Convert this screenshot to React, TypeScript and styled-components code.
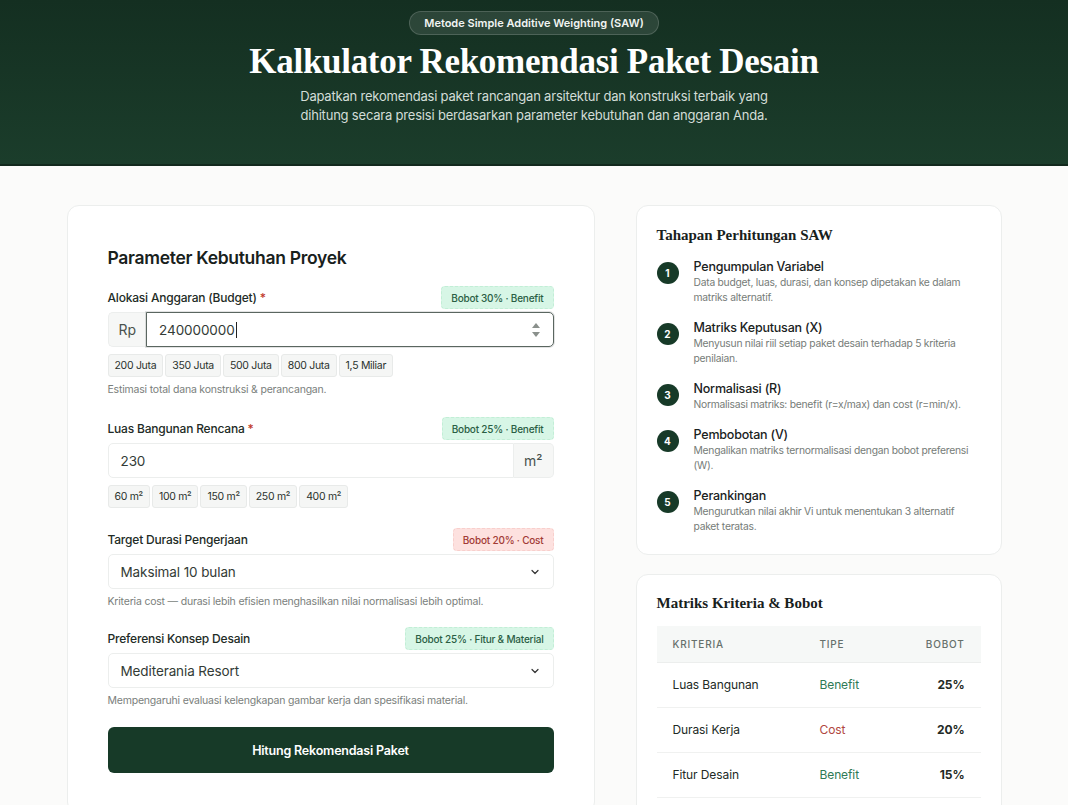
import React from 'react';
import styled, { createGlobalStyle } from 'styled-components';

const GlobalStyle = createGlobalStyle`
  * { box-sizing: border-box; }
  body {
    margin: 0;
    background: #fbfbfa;
    font-family: Inter, "Noto Sans", sans-serif;
    color: #1c2620;
  }
`;

const serif = `"Liberation Serif", "DejaVu Serif", serif`;

const Hero = styled.header`
  height: 166px;
  background: linear-gradient(180deg, #142f21 0%, #1b3d2b 100%);
  border-bottom: 2px solid #12291d;
  padding-top: 11px;
  display: flex;
  flex-direction: column;
  align-items: center;
  text-align: center;
`;

const Pill = styled.div`
  height: 24px;
  padding: 0 14px;
  display: flex;
  align-items: center;
  border-radius: 12px;
  background: rgba(255, 255, 255, 0.1);
  border: 1px solid rgba(255, 255, 255, 0.16);
  color: #f1f4f2;
  font-size: 11px;
  font-weight: 600;
`;

const HeroTitle = styled.h1`
  margin: 6px 0 0;
  font-family: ${serif};
  font-size: 35px;
  line-height: 42px;
  font-weight: 700;
  color: #ffffff;
  letter-spacing: -0.3px;
`;

const HeroText = styled.p`
  margin: 4px 0 0;
  width: 490px;
  font-size: 13px;
  line-height: 19px;
  color: #d3ddd7;
  letter-spacing: -0.2px;
`;

const Main = styled.main`
  width: 935px;
  margin: 39px auto 0;
  display: grid;
  grid-template-columns: 1fr 366px;
  gap: 41px;
  align-items: start;
`;

const Card = styled.section<{ $pad?: string }>`
  background: #ffffff;
  border: 1px solid #eceeed;
  border-radius: 12px;
  padding: ${p => p.$pad || '20px'};
`;

const SideCol = styled.div`
  display: flex;
  flex-direction: column;
  gap: 19px;
`;

const FormTitle = styled.h2`
  margin: 0 0 18px;
  font-size: 17.5px;
  font-weight: 600;
  letter-spacing: -0.3px;
  color: #18211c;
`;

const Field = styled.div<{ $gap: number }>`
  margin-bottom: ${p => p.$gap}px;
`;

const LabelRow = styled.div`
  display: flex;
  justify-content: space-between;
  align-items: center;
  height: 23px;
  margin-bottom: 3px;
`;

const Label = styled.label`
  font-size: 12px;
  font-weight: 500;
  color: #222b26;
  letter-spacing: -0.2px;
  span { color: #c0392b; }
`;

const Weight = styled.span<{ $cost?: boolean }>`
  height: 23px;
  padding: 0 9px;
  display: inline-flex;
  align-items: center;
  border-radius: 4px;
  font-size: 10px;
  font-weight: 500;
  letter-spacing: -0.2px;
  background: ${p => (p.$cost ? '#fde1df' : '#d7f6e6')};
  color: ${p => (p.$cost ? '#a23a35' : '#2a5e44')};
  border: 1px dashed ${p => (p.$cost ? '#f8cfcc' : '#c2eed6')};
`;

const InputGroup = styled.div`
  display: flex;
  height: 35px;
`;

const Addon = styled.div<{ $side: 'left' | 'right' }>`
  display: flex;
  align-items: center;
  padding: 0 10px;
  background: #f6f7f6;
  border: 1px solid #eceeed;
  color: #4a524d;
  font-size: 14px;
  border-radius: ${p => (p.$side === 'left' ? '5px 0 0 5px' : '0 5px 5px 0')};
  ${p => (p.$side === 'left' ? 'border-right: none;' : 'border-left: none;')}
`;

const TextBox = styled.div<{ $focus?: boolean; $round: string }>`
  flex: 1;
  display: flex;
  align-items: center;
  justify-content: space-between;
  padding: 0 12px;
  font-size: 13.5px;
  letter-spacing: -0.1px;
  color: #333b36;
  background: #fff;
  border: 1px solid ${p => (p.$focus ? '#5a6660' : '#eceeed')};
  border-radius: ${p => p.$round};
  box-shadow: ${p => (p.$focus ? '0 0 0 1px rgba(60,70,65,0.15)' : 'none')};
`;

const Caret = styled.span`
  display: inline-block;
  width: 1px;
  height: 16px;
  background: #222;
  margin-left: 1px;
  vertical-align: middle;
`;

const Value = styled.span`
  display: flex;
  align-items: center;
`;

const Chips = styled.div`
  display: flex;
  gap: 2px;
  margin-top: 7px;
`;

const Chip = styled.button`
  height: 23px;
  padding: 0 6px;
  border: 1px solid #e8eae9;
  background: #f5f6f5;
  border-radius: 3px;
  font-family: inherit;
  font-size: 10.5px;
  color: #2a322d;
  letter-spacing: -0.3px;
`;

const Hint = styled.p`
  margin: 6px 0 0;
  font-size: 10.5px;
  color: #7a807c;
  letter-spacing: -0.2px;
`;

const SubmitButton = styled.button`
  width: 100%;
  height: 46px;
  border: none;
  border-radius: 6px;
  background: #173a28;
  color: #fff;
  font-family: inherit;
  font-size: 12.5px;
  font-weight: 600;
  letter-spacing: -0.2px;
`;

const SideTitle = styled.h3`
  margin: 2px 0 14px;
  font-family: ${serif};
  font-size: 15px;
  font-weight: 700;
  color: #18211c;
`;

const Steps = styled.ol`
  list-style: none;
  margin: 0;
  padding: 0;
  display: flex;
  flex-direction: column;
  gap: 14px;
`;

const Step = styled.li`
  display: grid;
  grid-template-columns: 22px 1fr;
  column-gap: 15px;
`;

const StepNo = styled.span`
  width: 22px;
  height: 22px;
  margin-top: 4px;
  border-radius: 50%;
  background: #173a28;
  color: #fff;
  font-size: 10px;
  font-weight: 700;
  display: flex;
  align-items: center;
  justify-content: center;
`;

const StepTitle = styled.div`
  font-size: 12.5px;
  font-weight: 500;
  color: #1a221d;
  line-height: 17px;
  letter-spacing: -0.2px;
`;

const StepText = styled.div`
  font-size: 10.3px;
  line-height: 15px;
  color: #767c78;
  letter-spacing: -0.25px;
`;

const Table = styled.table`
  width: 100%;
  border-collapse: collapse;
`;

const Th = styled.th<{ $right?: boolean }>`
  height: 36px;
  padding: 0 16px;
  background: #f6f8f7;
  text-align: ${p => (p.$right ? 'right' : 'left')};
  font-size: 10px;
  font-weight: 500;
  letter-spacing: 0.8px;
  color: #66706b;
  border-bottom: 1px solid #eceeed;
`;

const Td = styled.td<{ $tone?: 'benefit' | 'cost'; $right?: boolean; $bold?: boolean }>`
  height: 45px;
  padding: 0 16px;
  font-size: 12px;
  letter-spacing: -0.1px;
  border-bottom: 1px solid #f0f1f0;
  text-align: ${p => (p.$right ? 'right' : 'left')};
  font-weight: ${p => (p.$bold ? 700 : 400)};
  color: ${p =>
    p.$tone === 'benefit' ? '#2f7a55' : p.$tone === 'cost' ? '#b1473f' : '#222a25'};
`;

const Chevron = () => (
  <svg width="12" height="12" viewBox="0 0 24 24" fill="none" stroke="#333" strokeWidth="2.4" strokeLinecap="round" strokeLinejoin="round">
    <path d="m6 9 6 6 6-6" />
  </svg>
);

const Spinner = () => (
  <svg width="10" height="18" viewBox="0 0 10 18">
    <path d="M5 2 L9 7 H1 Z" fill="#8a908c" />
    <path d="M5 16 L9 11 H1 Z" fill="#8a908c" />
  </svg>
);

const steps = [
  { t: 'Pengumpulan Variabel', d: 'Data budget, luas, durasi, dan konsep dipetakan ke dalam matriks alternatif.' },
  { t: 'Matriks Keputusan (X)', d: 'Menyusun nilai riil setiap paket desain terhadap 5 kriteria penilaian.' },
  { t: 'Normalisasi (R)', d: 'Normalisasi matriks: benefit (r=x/max) dan cost (r=min/x).' },
  { t: 'Pembobotan (V)', d: 'Mengalikan matriks ternormalisasi dengan bobot preferensi (W).' },
  { t: 'Perankingan', d: 'Mengurutkan nilai akhir Vi untuk menentukan 3 alternatif paket teratas.' },
];

const criteria: { name: string; type: 'benefit' | 'cost'; w: string }[] = [
  { name: 'Luas Bangunan', type: 'benefit', w: '25%' },
  { name: 'Durasi Kerja', type: 'cost', w: '20%' },
  { name: 'Fitur Desain', type: 'benefit', w: '15%' },
];

export default function App() {
  return (
    <>
      <GlobalStyle />
      <Hero>
        <Pill>Metode Simple Additive Weighting (SAW)</Pill>
        <HeroTitle>Kalkulator Rekomendasi Paket Desain</HeroTitle>
        <HeroText>
          Dapatkan rekomendasi paket rancangan arsitektur dan konstruksi terbaik yang dihitung secara
          presisi berdasarkan parameter kebutuhan dan anggaran Anda.
        </HeroText>
      </Hero>

      <Main>
        <Card $pad="41px 40px 40px">
          <FormTitle>Parameter Kebutuhan Proyek</FormTitle>

          <Field $gap={21}>
            <LabelRow>
              <Label>Alokasi Anggaran (Budget) <span>*</span></Label>
              <Weight>Bobot 30% · Benefit</Weight>
            </LabelRow>
            <InputGroup>
              <Addon $side="left">Rp</Addon>
              <TextBox $focus $round="0 5px 5px 0">
                <Value>240000000<Caret /></Value>
                <Spinner />
              </TextBox>
            </InputGroup>
            <Chips>
              {['200 Juta', '350 Juta', '500 Juta', '800 Juta', '1,5 Miliar'].map(c => (
                <Chip key={c}>{c}</Chip>
              ))}
            </Chips>
            <Hint>Estimasi total dana konstruksi &amp; perancangan.</Hint>
          </Field>

          <Field $gap={20}>
            <LabelRow>
              <Label>Luas Bangunan Rencana <span>*</span></Label>
              <Weight>Bobot 25% · Benefit</Weight>
            </LabelRow>
            <InputGroup>
              <TextBox $round="5px 0 0 5px">230</TextBox>
              <Addon $side="right">m²</Addon>
            </InputGroup>
            <Chips>
              {['60 m²', '100 m²', '150 m²', '250 m²', '400 m²'].map(c => (
                <Chip key={c}>{c}</Chip>
              ))}
            </Chips>
          </Field>

          <Field $gap={19}>
            <LabelRow>
              <Label>Target Durasi Pengerjaan</Label>
              <Weight $cost>Bobot 20% · Cost</Weight>
            </LabelRow>
            <InputGroup>
              <TextBox $round="5px">
                Maksimal 10 bulan
                <Chevron />
              </TextBox>
            </InputGroup>
            <Hint>Kriteria cost — durasi lebih efisien menghasilkan nilai normalisasi lebih optimal.</Hint>
          </Field>

          <Field $gap={20}>
            <LabelRow>
              <Label>Preferensi Konsep Desain</Label>
              <Weight>Bobot 25% · Fitur &amp; Material</Weight>
            </LabelRow>
            <InputGroup>
              <TextBox $round="5px">
                Mediterania Resort
                <Chevron />
              </TextBox>
            </InputGroup>
            <Hint>Mempengaruhi evaluasi kelengkapan gambar kerja dan spesifikasi material.</Hint>
          </Field>

          <SubmitButton>Hitung Rekomendasi Paket</SubmitButton>
        </Card>

        <SideCol>
          <Card $pad="19px 20px 20px">
            <SideTitle>Tahapan Perhitungan SAW</SideTitle>
            <Steps>
              {steps.map((s, i) => (
                <Step key={s.t}>
                  <StepNo>{i + 1}</StepNo>
                  <div>
                    <StepTitle>{s.t}</StepTitle>
                    <StepText>{s.d}</StepText>
                  </div>
                </Step>
              ))}
            </Steps>
          </Card>

          <Card $pad="18px 20px 20px">
            <SideTitle>Matriks Kriteria &amp; Bobot</SideTitle>
            <Table>
              <thead>
                <tr>
                  <Th>KRITERIA</Th>
                  <Th>TIPE</Th>
                  <Th $right>BOBOT</Th>
                </tr>
              </thead>
              <tbody>
                {criteria.map(c => (
                  <tr key={c.name}>
                    <Td>{c.name}</Td>
                    <Td $tone={c.type}>{c.type === 'benefit' ? 'Benefit' : 'Cost'}</Td>
                    <Td $right $bold>{c.w}</Td>
                  </tr>
                ))}
              </tbody>
            </Table>
          </Card>
        </SideCol>
      </Main>
    </>
  );
}
